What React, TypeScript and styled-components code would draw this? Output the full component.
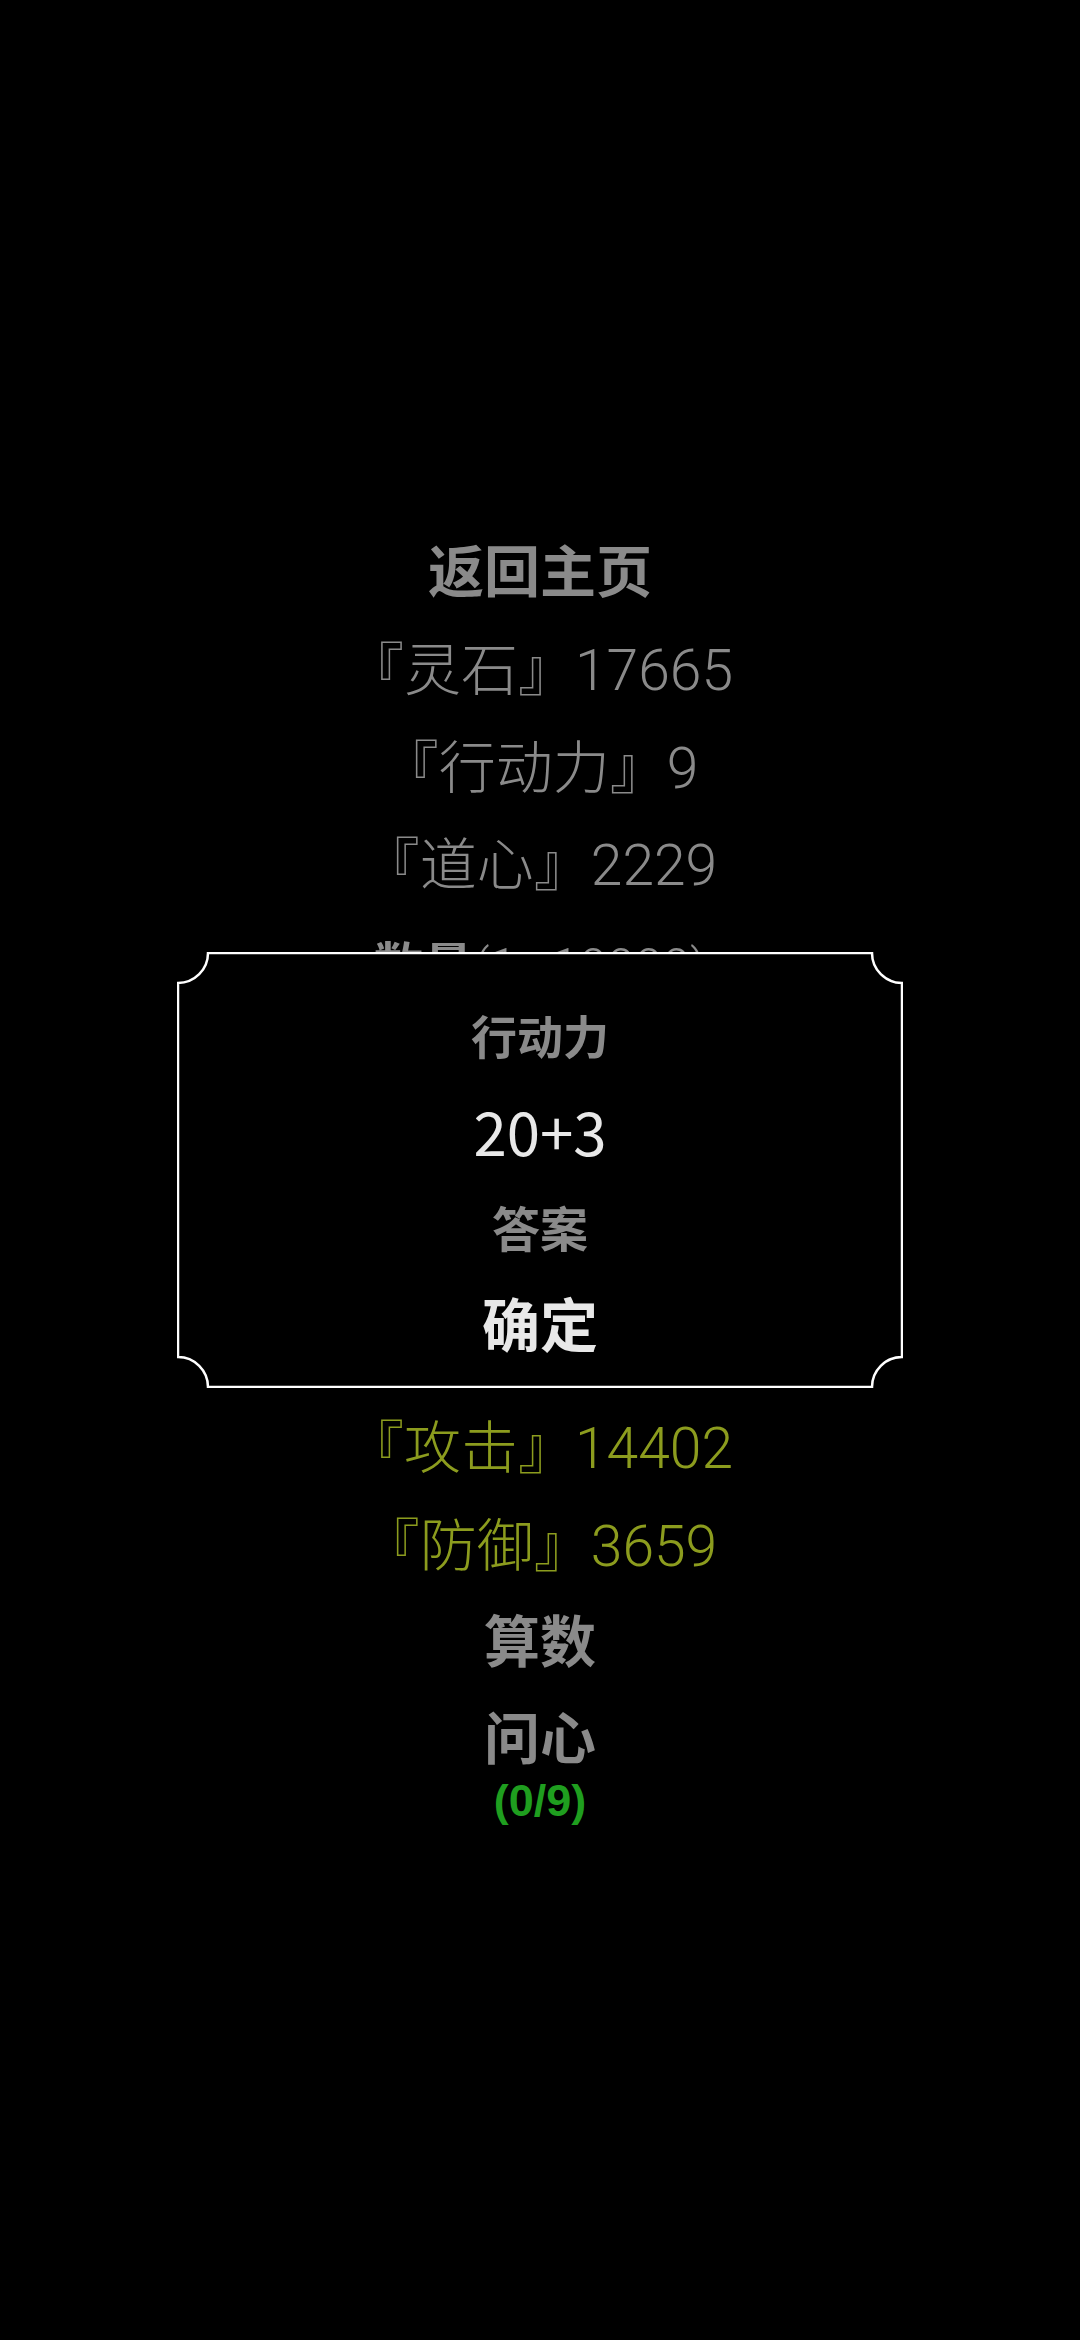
import React from "react";
import styled, { createGlobalStyle } from "styled-components";

const GlobalStyle = createGlobalStyle`
  html, body {
    margin: 0;
    padding: 0;
    background-color: #000000;
  }
  body {
    font-family: "Noto Sans CJK SC", "Noto Sans", sans-serif;
  }
`;

type Tone = "gray" | "olive" | "white";

const tones: Record<Tone, string> = {
  gray: "#8a8a8a",
  olive: "#8c9c1e",
  white: "#e8e8e8",
};

const stats: { name: string; value: string; tone: Tone }[] = [
  { name: "灵石", value: "17665", tone: "gray" },
  { name: "行动力", value: "9", tone: "gray" },
  { name: "道心", value: "2229", tone: "gray" },
];

const battle: { name: string; value: string; tone: Tone }[] = [
  { name: "攻击", value: "14402", tone: "olive" },
  { name: "防御", value: "3659", tone: "olive" },
];

function App() {
  return (
    <>
      <GlobalStyle />
      <Page>
        <Row $size={56} $bold>返回主页</Row>
        {stats.map((s) => (
          <Row key={s.name} $size={57} $tone={s.tone}>
            『{s.name}』{s.value}
          </Row>
        ))}
        <Row $size={50}>
          <b>数量</b>(1~10000)
        </Row>
        <FormBlock>
          <AmountInput type="number" min={1} max={10000} />
        </FormBlock>
        {battle.map((s) => (
          <Row key={s.name} $size={57} $tone={s.tone}>
            『{s.name}』{s.value}
          </Row>
        ))}
        <Row $size={56} $bold>算数</Row>
        <Row $size={56} $bold>问心</Row>
        <Progress>(0/9)</Progress>
      </Page>

      <Overlay>
        <Dialog>
          <Frame viewBox="0 0 726 436" preserveAspectRatio="none">
            <path
              d="M31 1 H695 A30 30 0 0 0 725 31 V405 A30 30 0 0 0 695 435 H31 A30 30 0 0 0 1 405 V31 A30 30 0 0 0 31 1 Z"
              fill="#000000"
              stroke="#ffffff"
              strokeWidth="2.5"
            />
          </Frame>
          <DialogLine $size={46} $tone="gray" $bold>行动力</DialogLine>
          <DialogLine $size={60} $tone="white">20+3</DialogLine>
          <DialogLine $size={48} $tone="gray" $bold>答案</DialogLine>
          <DialogLine $size={58} $tone="white" $bold>确定</DialogLine>
        </Dialog>
      </Overlay>
    </>
  );
}

export default App;

const Page = styled.main`
  min-height: 2340px;
  box-sizing: border-box;
  padding-top: 525px;
  display: flex;
  flex-direction: column;
  align-items: center;
`;

const Row = styled.div<{ $size: number; $tone?: Tone; $bold?: boolean }>`
  height: 97.25px;
  line-height: 97.25px;
  font-family: "Roboto", "Noto Sans CJK SC", sans-serif;
  font-size: ${(p) => p.$size}px;
  font-weight: ${(p) => (p.$bold ? 700 : 300)};
  color: ${(p) => tones[p.$tone ?? "gray"]};
  text-align: center;
  white-space: nowrap;

  b {
    font-family: "Noto Sans CJK SC", sans-serif;
    font-weight: 700;
  }
`;

const FormBlock = styled.div`
  height: 389px;
  display: flex;
  align-items: center;
  justify-content: center;
`;

const AmountInput = styled.input`
  width: 400px;
  height: 64px;
  background: #000000;
  border: 2px solid #555555;
  color: #8a8a8a;
  font-size: 40px;
  text-align: center;
`;

const Progress = styled.div`
  height: 24px;
  line-height: 24px;
  font-family: "Liberation Sans", "Noto Sans CJK SC", sans-serif;
  font-size: 45px;
  font-weight: 700;
  color: #1f9e1f;
`;

const Overlay = styled.div`
  position: fixed;
  inset: 0;
  display: flex;
  align-items: center;
  justify-content: center;
`;

const Dialog = styled.section`
  position: relative;
  width: 726px;
  height: 436px;
  box-sizing: border-box;
  padding-top: 34px;
  display: flex;
  flex-direction: column;
  align-items: center;
`;

const Frame = styled.svg`
  position: absolute;
  inset: 0;
  width: 100%;
  height: 100%;
  z-index: 0;
`;

const DialogLine = styled.div<{ $size: number; $tone: Tone; $bold?: boolean }>`
  position: relative;
  z-index: 1;
  height: 96px;
  line-height: 96px;
  font-size: ${(p) => p.$size}px;
  font-weight: ${(p) => (p.$bold ? 700 : 400)};
  color: ${(p) => tones[p.$tone]};
  white-space: nowrap;
`;
